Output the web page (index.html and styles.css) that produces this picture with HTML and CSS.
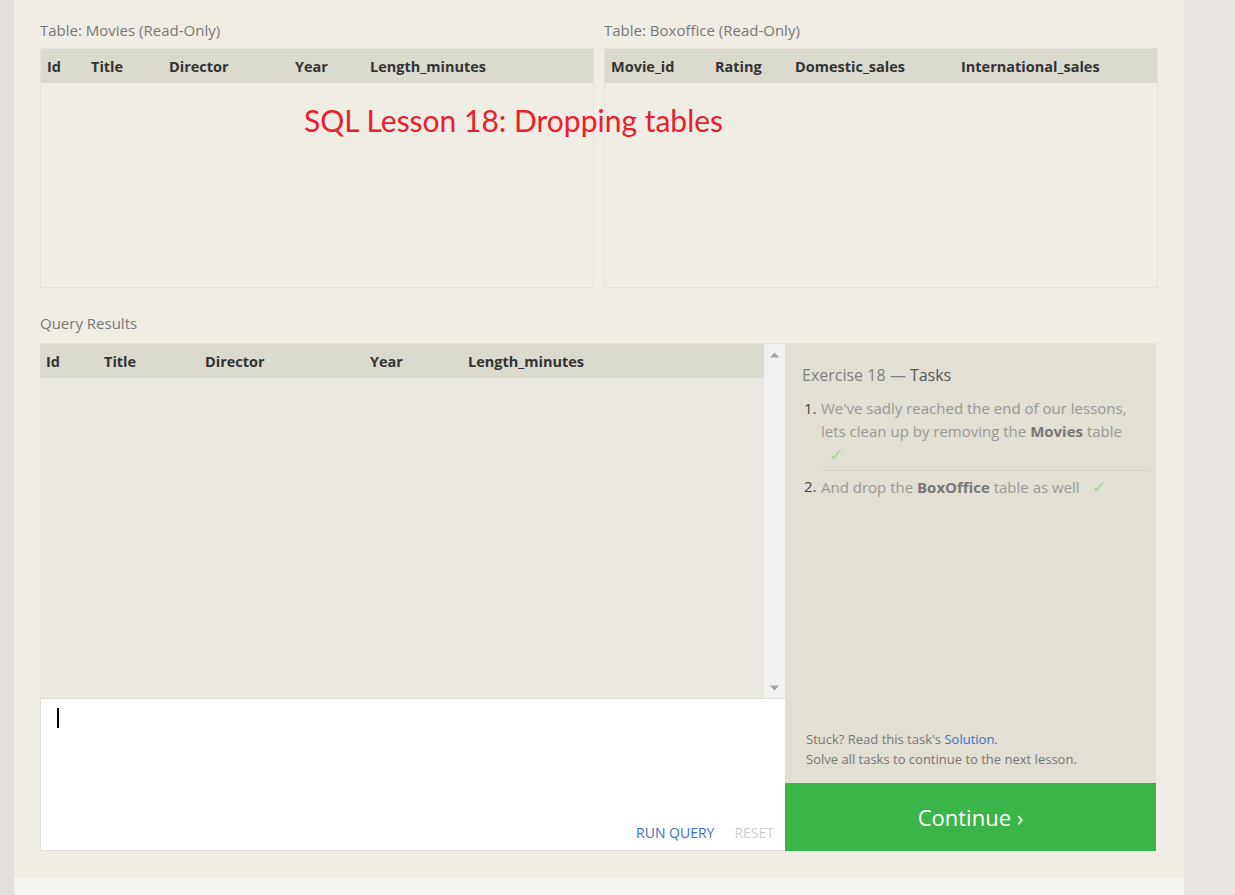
FILE: index.html
```html
<!DOCTYPE html>
<html>
<head>
<meta charset="utf-8">
<link rel="stylesheet" href="styles.css">
</head>
<body>
<div class="page">
  <div class="strip-left"></div>
  <div class="main">
    <div class="panel">
      <div class="tables">
        <div class="tbl-col">
          <div class="label">Table: Movies (Read-Only)</div>
          <div class="tbl">
            <div class="thead">
              <span class="c" style="width:44px">Id</span>
              <span class="c" style="width:78px">Title</span>
              <span class="c" style="width:126px">Director</span>
              <span class="c" style="width:75px">Year</span>
              <span class="c">Length_minutes</span>
            </div>
          </div>
        </div>
        <div class="tbl-col">
          <div class="label">Table: Boxoffice (Read-Only)</div>
          <div class="tbl">
            <div class="thead">
              <span class="c" style="width:104px">Movie_id</span>
              <span class="c" style="width:80px">Rating</span>
              <span class="c" style="width:166px">Domestic_sales</span>
              <span class="c">International_sales</span>
            </div>
          </div>
        </div>
      </div>
      <div class="label results-label">Query Results</div>
      <div class="work">
        <div class="left">
          <div class="results">
            <div class="res-table">
              <div class="thead">
                <span class="c" style="width:58px">Id</span>
                <span class="c" style="width:101px">Title</span>
                <span class="c" style="width:165px">Director</span>
                <span class="c" style="width:98px">Year</span>
                <span class="c">Length_minutes</span>
              </div>
            </div>
            <div class="scrollbar">
              <svg class="arrow" width="9" height="6" viewBox="0 0 9 6"><path d="M0 5.5 L4.5 0.5 L9 5.5 Z" fill="#a3a3a3"/></svg>
              <svg class="arrow" width="9" height="6" viewBox="0 0 9 6"><path d="M0 0.5 L4.5 5.5 L9 0.5 Z" fill="#a3a3a3"/></svg>
            </div>
          </div>
          <div class="editor">
            <div class="cursor"></div>
            <div class="actions">
              <span class="run">RUN QUERY</span>
              <span class="reset">RESET</span>
            </div>
          </div>
        </div>
        <div class="right">
          <div class="tasks">
            <div class="ex-title">Exercise 18 — <span class="dark">Tasks</span></div>
            <ol class="task-list">
              <li class="task"><span class="num">1.</span><span class="txt">We've sadly reached the end of our lessons, lets clean up by removing the <b>Movies</b> table <span class="check">✓</span></span></li>
              <li class="task"><span class="num">2.</span><span class="txt">And drop the <b>BoxOffice</b> table as well <span class="check">✓</span></span></li>
            </ol>
            <div class="stuck">
              <div>Stuck? Read this task's <span class="link">Solution</span>.</div>
              <div>Solve all tasks to continue to the next lesson.</div>
            </div>
          </div>
          <div class="continue">Continue ›</div>
        </div>
      </div>
      <div class="overlay-title">SQL Lesson 18: Dropping tables</div>
    </div>
    <div class="below"></div>
  </div>
  <div class="strip-right"></div>
</div>
</body>
</html>
```

FILE: styles.css
```css
html, body {
  margin: 0;
  padding: 0;
  height: 100%;
}
body {
  background: #e9e5e1;
  font-family: "Open Sans", "Liberation Sans", sans-serif;
  overflow: hidden;
}
.page {
  display: flex;
  height: 895px;
}
.strip-left {
  width: 14px;
  background: #e4dfdc;
}
.strip-right {
  flex: 1;
  background: #e9e5e1;
}
.main {
  width: 1170px;
  display: flex;
  flex-direction: column;
}
.panel {
  position: relative;
  background: #f0ede5;
  padding: 20px 26px 27px 26px;
}
.below {
  flex: 1;
  background: #f5f4f0;
}
.label {
  font-size: 15px;
  line-height: 20px;
  color: #777;
  margin-bottom: 8px;
}
.tables {
  display: flex;
  gap: 10px;
}
.tbl-col {
  flex: 1;
}
.tbl {
  height: 238px;
  border: 1px solid #e4e1d9;
  background: #f0ede5;
}
.thead {
  display: flex;
  height: 34px;
  align-items: center;
  background: #dbdacf;
  padding-left: 6px;
  font-weight: 700;
  font-size: 14.5px;
  color: #333;
}
.c {
  display: block;
  white-space: nowrap;
}
.results-label {
  margin-top: 25px;
  margin-bottom: 10px;
}
.work {
  display: flex;
}
.left {
  width: 745px;
  display: flex;
  flex-direction: column;
}
.results {
  height: 355px;
  display: flex;
  border-top: 1px solid #e4e1d9;
  box-sizing: border-box;
}
.res-table {
  flex: 1;
  background: #eae8e0;
}
.scrollbar {
  width: 21px;
  background: #f1f1f1;
  display: flex;
  flex-direction: column;
  justify-content: space-between;
  align-items: center;
  padding: 8px 0 7px;
  box-sizing: border-box;
}
.editor {
  height: 153px;
  background: #fff;
  border: 1px solid #e0ddd5;
  border-right: none;
  box-sizing: border-box;
  display: flex;
  flex-direction: column;
  justify-content: space-between;
  padding: 9px 0 8px 16px;
}
.cursor {
  width: 2px;
  height: 20px;
  background: #000;
}
.actions {
  display: flex;
  justify-content: flex-end;
  gap: 20px;
  padding-right: 11px;
  font-size: 14px;
  line-height: 18px;
}
.run {
  color: #3b6fc5;
}
.reset {
  color: #cfcfcf;
}
.right {
  width: 371px;
  display: flex;
  flex-direction: column;
}
.tasks {
  height: 440px;
  background: #e2dfd4;
  box-sizing: border-box;
  padding: 21px 7px 14px 17px;
  display: flex;
  flex-direction: column;
}
.ex-title {
  font-size: 16px;
  line-height: 22px;
  color: #808080;
}
.ex-title .dark {
  color: #555;
}
.task-list {
  list-style: none;
  margin: 11px 0 0 0;
  padding: 0;
}
.task {
  display: flex;
  font-size: 15px;
  line-height: 23px;
  color: #999;
  padding-bottom: 3px;
}
.task + .task {
  border-top: 1px solid #d5d2c7;
  margin-left: 18px;
  padding-top: 4px;
}
.task + .task .num {
  margin-left: -18px;
}
.num {
  width: 19px;
  flex: none;
  color: #444;
  padding-left: 2px;
  box-sizing: border-box;
}
.txt {
  padding-right: 12px;
}
.txt b {
  color: #777;
}
.check {
  display: inline-block;
  color: #a2d3a2;
  font-size: 17px;
  margin-left: 8px;
}
.stuck {
  margin-top: auto;
  font-size: 13px;
  line-height: 20px;
  color: #777;
  padding-left: 4px;
}
.link {
  color: #3b6fc5;
}
.continue {
  height: 68px;
  background: #3bb54a;
  color: #fff;
  font-size: 22px;
  display: flex;
  align-items: center;
  justify-content: center;
}
.overlay-title {
  position: absolute;
  left: 290px;
  top: 100px;
  font-family: "Lato", sans-serif;
  font-size: 30px;
  line-height: 40px;
  color: #e8202a;
}
```
